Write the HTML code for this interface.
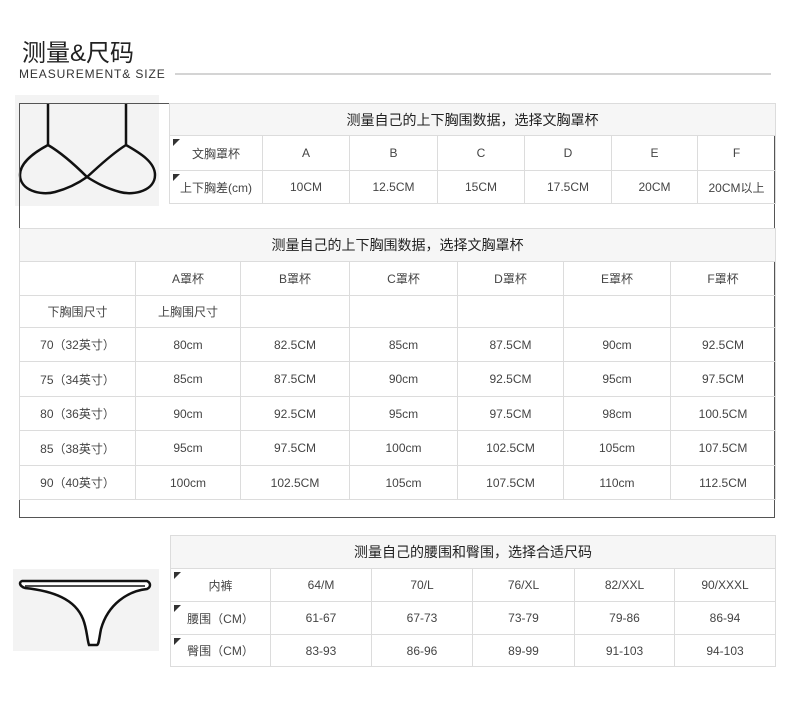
<!DOCTYPE html>
<html><head><meta charset="utf-8"><style>
*{margin:0;padding:0;box-sizing:border-box}
body{width:790px;height:704px;background:#fff;position:relative;overflow:hidden;font-family:"Liberation Sans","Noto Sans CJK SC",sans-serif;color:#333}
.a{position:absolute}
table{position:absolute;border-collapse:collapse;table-layout:fixed;font-size:12px;color:#444}
td{border:1px solid #dcdcdc;text-align:center;vertical-align:middle;padding:0;position:relative;white-space:nowrap}
td.t{background:#f6f6f6;font-size:14px;color:#222}
.tri{position:absolute;left:3px;top:3px;width:0;height:0;border-top:7px solid #333;border-right:7px solid transparent}
</style></head><body>
<div class="a" style="left:22px;top:33px;font-size:24px;color:#222">测量&amp;尺码</div>
<div class="a" style="left:19px;top:67px;font-size:12px;color:#333;letter-spacing:0.9px">MEASUREMENT&amp; SIZE</div>
<div class="a" style="left:175px;top:73px;width:596px;height:2px;background:#d4d4d4"></div>

<div class="a" style="left:15px;top:95px;width:144px;height:111px;background:#f3f3f3"></div>
<svg class="a" style="left:0;top:0" width="170" height="210" viewBox="0 0 170 210">
<path d="M48 103 L48 145 C35 152 20 162 20 175 C20 190 40 196 55 192 C70 188 80 182 87 177 C95 170 110 155 126 145 L126 103 M126 145 C140 153 155 162 155 175 C155 190 135 196 120 192 C105 188 95 182 87 177 C80 170 65 155 48 145" fill="none" stroke="#111" stroke-width="2.5"/>
</svg>
<div class="a" style="left:19px;top:103px;width:756px;height:415px;border:1px solid #555"></div>

<table style="left:169px;top:103px;width:606px">
<colgroup><col style="width:93px"><col style="width:87px"><col style="width:88px"><col style="width:87px"><col style="width:87px"><col style="width:86px"><col style="width:78px"></colgroup>
<tr style="height:32px"><td class="t" colspan="7">测量自己的上下胸围数据，选择文胸罩杯</td></tr>
<tr style="height:35px"><td><span class="tri"></span>文胸罩杯</td><td>A</td><td>B</td><td>C</td><td>D</td><td>E</td><td>F</td></tr>
<tr style="height:33px"><td><span class="tri"></span>上下胸差(cm)</td><td>10CM</td><td>12.5CM</td><td>15CM</td><td>17.5CM</td><td>20CM</td><td>20CM以上</td></tr>
</table>

<table style="left:19px;top:228px;width:756px">
<colgroup><col style="width:116px"><col style="width:105px"><col style="width:109px"><col style="width:108px"><col style="width:106px"><col style="width:107px"><col style="width:105px"></colgroup>
<tr style="height:33px"><td class="t" colspan="7">测量自己的上下胸围数据，选择文胸罩杯</td></tr>
<tr style="height:34px"><td></td><td>A罩杯</td><td>B罩杯</td><td>C罩杯</td><td>D罩杯</td><td>E罩杯</td><td>F罩杯</td></tr>
<tr style="height:32px"><td>下胸围尺寸</td><td>上胸围尺寸</td><td></td><td></td><td></td><td></td><td></td></tr>
<tr style="height:34px"><td>70（32英寸）</td><td>80cm</td><td>82.5CM</td><td>85cm</td><td>87.5CM</td><td>90cm</td><td>92.5CM</td></tr>
<tr style="height:35px"><td>75（34英寸）</td><td>85cm</td><td>87.5CM</td><td>90cm</td><td>92.5CM</td><td>95cm</td><td>97.5CM</td></tr>
<tr style="height:34px"><td>80（36英寸）</td><td>90cm</td><td>92.5CM</td><td>95cm</td><td>97.5CM</td><td>98cm</td><td>100.5CM</td></tr>
<tr style="height:35px"><td>85（38英寸）</td><td>95cm</td><td>97.5CM</td><td>100cm</td><td>102.5CM</td><td>105cm</td><td>107.5CM</td></tr>
<tr style="height:34px"><td>90（40英寸）</td><td>100cm</td><td>102.5CM</td><td>105cm</td><td>107.5CM</td><td>110cm</td><td>112.5CM</td></tr>
</table>

<div class="a" style="left:13px;top:569px;width:146px;height:82px;background:#f3f3f3"></div>
<svg class="a" style="left:13px;top:569px" width="146" height="82" viewBox="0 0 146 82">
<path d="M9 12 L134 12 C138 14 138 18 134 20 C115 22 95 35 88 60 C86 70 86 75 84 76 L76 76 C74 70 74 60 70 50 C62 30 40 22 12 19 C6 17 6 13 9 12 Z" fill="#fff" stroke="#111" stroke-width="2.5"/>
<path d="M12 17 L132 17" stroke="#111" stroke-width="1.5"/>
</svg>

<table style="left:170px;top:535px;width:605px">
<colgroup><col style="width:100px"><col style="width:101px"><col style="width:101px"><col style="width:102px"><col style="width:100px"><col style="width:101px"></colgroup>
<tr style="height:33px"><td class="t" colspan="6">测量自己的腰围和臀围，选择合适尺码</td></tr>
<tr style="height:33px"><td><span class="tri"></span>内裤</td><td>64/M</td><td>70/L</td><td>76/XL</td><td>82/XXL</td><td>90/XXXL</td></tr>
<tr style="height:33px"><td><span class="tri"></span>腰围（CM）</td><td>61-67</td><td>67-73</td><td>73-79</td><td>79-86</td><td>86-94</td></tr>
<tr style="height:32px"><td><span class="tri"></span>臀围（CM）</td><td>83-93</td><td>86-96</td><td>89-99</td><td>91-103</td><td>94-103</td></tr>
</table>
</body></html>
